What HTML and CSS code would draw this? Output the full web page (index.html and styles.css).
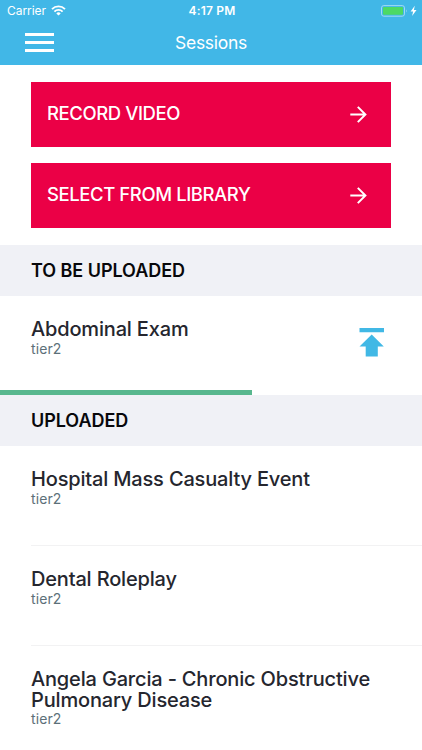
FILE: index.html
```html
<!DOCTYPE html>
<html lang="en">
<head>
<meta charset="utf-8">
<title>Sessions</title>
<link rel="stylesheet" href="styles.css">
</head>
<body>
<header class="header">
  <div class="status">
    <div class="carrier"><span class="carrier-name">Carrier</span>
      <svg class="wifi" width="15" height="11" viewBox="0 0 15 11" fill="none" stroke="#fff" stroke-width="1.9"><path d="M1 4.1a9.2 9.2 0 0 1 13 0M3.4 6.6a5.8 5.8 0 0 1 8.2 0"/><path d="M7.5 10.6L5.3 8.4a3.1 3.1 0 0 1 4.4 0z" fill="#fff" stroke="none"/></svg>
    </div>
    <span class="time">4:17 PM</span>
    <svg class="battery" width="38" height="12" viewBox="0 0 38 12"><rect x=".5" y=".6" width="23" height="10.6" rx="2.3" fill="none" stroke="#a1dbf3"/><rect x="2" y="2" width="20" height="7.8" rx="1" fill="#4cd964"/><path d="M25 4.2q1.5 1.6 0 3.4z" fill="#a1dbf3"/><path d="M33.8 .8L29.6 6.5h2.5l-1 4.5 4.4-6h-2.6z" fill="#fff"/></svg>
  </div>
  <nav class="nav">
    <span class="menu"><i></i><i></i><i></i></span>
    <h1 class="page-title">Sessions</h1>
  </nav>
</header>
<main>
  <div class="actions">
    <div class="button"><span>RECORD VIDEO</span><svg width="17" height="17" viewBox="0 0 17 17" fill="none" stroke="#fff" stroke-width="2"><path d="M.3 8.5h15M7.8 .9l7.6 7.6-7.6 7.6"/></svg></div>
    <div class="button"><span>SELECT FROM LIBRARY</span><svg width="17" height="17" viewBox="0 0 17 17" fill="none" stroke="#fff" stroke-width="2"><path d="M.3 8.5h15M7.8 .9l7.6 7.6-7.6 7.6"/></svg></div>
  </div>
  <h2 class="section">TO BE UPLOADED</h2>
  <div class="pending">
    <div class="session">
      <h3 class="name">Abdominal Exam</h3>
      <p class="tier">tier2</p>
    </div>
    <svg class="upload" width="25" height="29" viewBox="0 0 25 29" fill="#41b8e5"><path d="M.5 0H25v4.3H.5zM12.7 6.5L24.8 18.5h-6V28.5H6.7V18.5H.5z"/></svg>
    <div class="progress"></div>
  </div>
  <h2 class="section">UPLOADED</h2>
  <div class="list">
    <div class="session"><h3 class="name">Hospital Mass Casualty Event</h3><p class="tier">tier2</p></div>
    <div class="session"><h3 class="name">Dental Roleplay</h3><p class="tier">tier2</p></div>
    <div class="session"><h3 class="name">Angela Garcia - Chronic Obstructive Pulmonary Disease</h3><p class="tier">tier2</p></div>
  </div>
</main>
</body>
</html>
```
FILE: styles.css
```css
* { box-sizing: border-box; margin: 0; }
body {
  height: 750px;
  overflow: hidden;
  background: #fff;
  font-family: Inter, "Liberation Sans", sans-serif;
}
svg { display: block; flex: none; }
.header { height: 65.4px; background: #41b7e7; color: #fff; }
.status {
  display: grid;
  grid-template-columns: 1fr auto 1fr;
  height: 21px;
  padding: 0 3px 0 7px;
  align-items: center;
}
.carrier { display: flex; align-items: center; gap: 5px; }
.carrier-name { font-size: 12px; line-height: 21px; letter-spacing: -.05px; }
.time { font-size: 12px; font-weight: 600; letter-spacing: .2px; margin-left: -2px; }
.battery { justify-self: end; }
.nav {
  display: grid;
  grid-template-columns: 1fr auto 1fr;
  align-items: center;
  height: 42px;
  padding-left: 25px;
}
.menu { display: flex; flex-direction: column; gap: 5px; width: 28.5px; }
.menu i { height: 3px; background: #fff; }
.page-title { font-size: 17.5px; font-weight: 400; letter-spacing: -.3px; margin-left: -25px; }
.actions { display: flex; flex-direction: column; gap: 16.3px; padding: 16.5px 31px 17px; }
.button {
  display: flex;
  align-items: center;
  justify-content: space-between;
  height: 65px;
  padding: 0 24px 3px 16px;
  background: #eb0046;
  color: #fff;
  font-size: 18.5px;
  font-weight: 500;
  letter-spacing: -.42px;
}
.button svg { margin-top: 3px; }
.section {
  height: 50.5px;
  padding-left: 31px;
  background: #f0f1f6;
  color: #08080b;
  font-size: 18px;
  font-weight: 600;
  letter-spacing: -.05px;
  line-height: 51px;
}
.pending { display: grid; grid-template-columns: 1fr 63px; height: 99.5px; grid-template-rows: 94.5px 5px; }
.progress { width: 252px; background: #58b78e; }
.session { padding: 23.5px 31px 0 0; }
.pending .session { padding-left: 31px; }
.upload { margin-top: 32.5px; }
.name { color: #25262e; font-size: 20px; font-weight: 500; letter-spacing: -.17px; line-height: 20.4px; }
.tier { color: #5c7079; font-size: 14px; letter-spacing: .1px; line-height: 18px; }
.list { padding-left: 31px; }
.list .session { height: 100px; border-bottom: 1px solid #f2f2f3; }
.list .session:last-child { height: 104px; border: 0; }
```
